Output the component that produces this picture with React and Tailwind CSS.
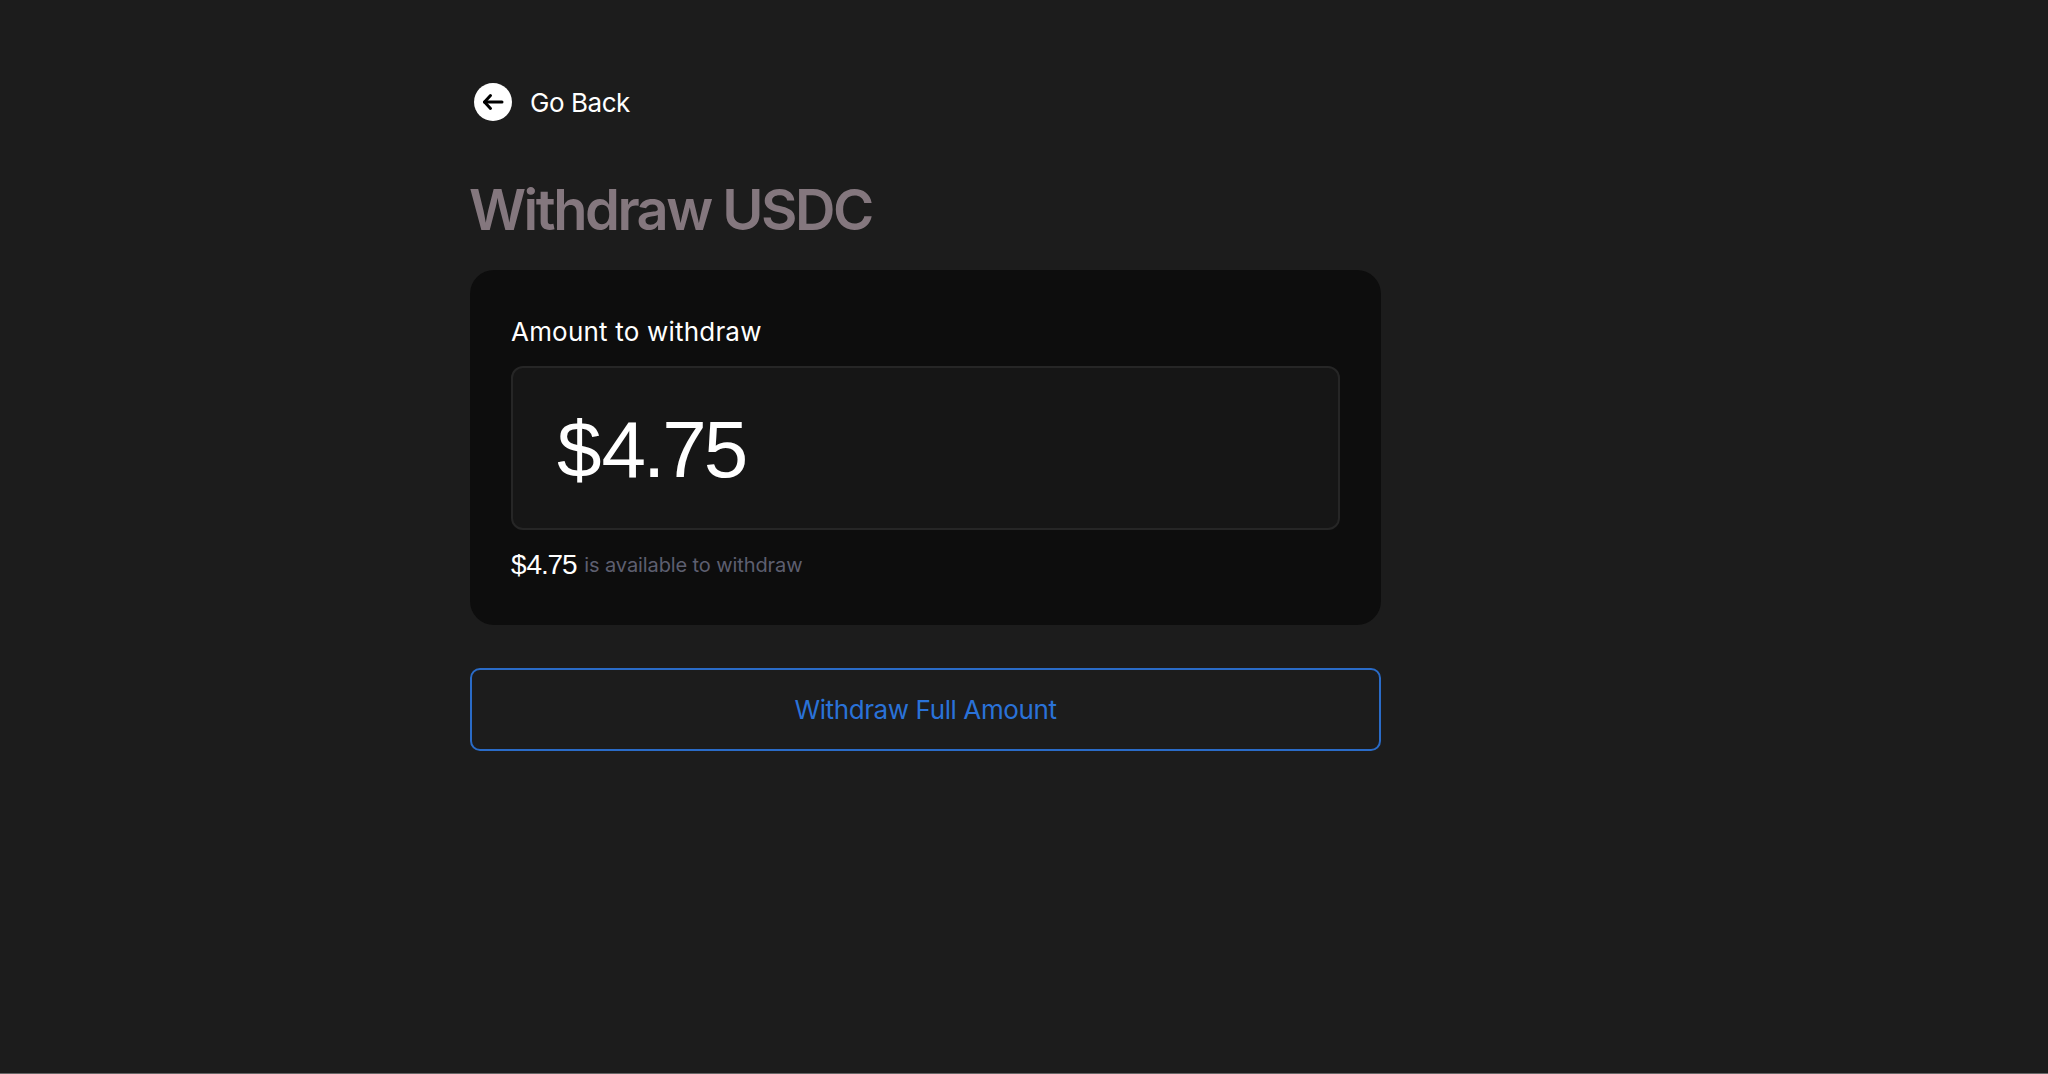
const sans = 'font-[Inter,sans-serif]';

function App() {
    return (
        <div className={`h-[1074px] border-b border-[#666666] bg-[#1c1c1c] pt-[83px] pl-[470px] ${sans}`}>
            <div className="w-[911px]">
                {/* Back link */}
                <a className="flex items-center pl-1 gap-[18px] h-[38px]">
                    <span className="flex items-center justify-center w-[38px] h-[38px] rounded-full bg-white">
                        <svg width="38" height="38" viewBox="0 0 38 38" fill="none" stroke="#000" strokeWidth="3" strokeLinecap="round" strokeLinejoin="round">
                            <path d="M28 19H10.5" />
                            <path d="M16.5 12.5L10.5 19L16.5 25.5" />
                        </svg>
                    </span>
                    <span className="text-[26px] tracking-[-0.45px] text-white">Go Back</span>
                </a>

                <h1 className="mt-[55px] -ml-px text-[56px] leading-[68px] font-semibold tracking-[-2.5px] text-[#84777e]">Withdraw USDC</h1>

                {/* Amount card */}
                <div className="mt-[26px] h-[355px] rounded-[24px] bg-[#0d0d0d] pt-[44px] px-[41px]">
                    <label className="block text-[26px] leading-[36px] tracking-[0.2px] text-white">Amount to withdraw</label>
                    <div className="mt-[16px] h-[164px] rounded-[12px] border-2 border-[#262626] bg-[#161616] flex items-center pl-[44px] pt-[3px]">
                        <span className="font-['Liberation_Sans',sans-serif] text-[80px] text-white">$<span className="tracking-[-3px]">4.75</span></span>
                    </div>
                    <div className="mt-[14px] flex items-center gap-2">
                        <span className="font-['Liberation_Sans',sans-serif] text-[28px] text-white">$<span className="tracking-[-1.2px]">4.75</span></span>
                        <span className="text-[20px] tracking-[-0.1px] text-[#5d5f70]">is available to withdraw</span>
                    </div>
                </div>

                <button className="mt-[43px] w-full h-[83px] rounded-[10px] border-2 border-[#2a6bc7] text-[26px] tracking-[-0.4px] text-[#2a72d8]">
                    Withdraw Full Amount
                </button>
            </div>
        </div>
    );
}

export default App;
